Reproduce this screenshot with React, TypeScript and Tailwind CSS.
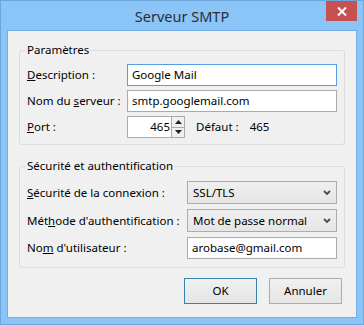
import React from "react";

const Chevron = () => (
  <svg width="8" height="6" viewBox="0 0 8 6">
    <path d="M1 1 L4 4 L7 1" stroke="#3d4d5d" strokeWidth="1.8" fill="none" />
  </svg>
);

const Select = ({ value }: { value: string }) => (
  <div className="h-[23px] border border-[#acacac] bg-gradient-to-b from-[#f0f0f0] to-[#e5e5e5] flex items-center justify-between pl-[5px] pr-[5px]">
    <span>{value}</span>
    <Chevron />
  </div>
);

const Input = ({ value, focused }: { value: string; focused?: boolean }) => (
  <div
    className={
      "h-[22px] bg-white border flex items-center pl-[4px] " +
      (focused ? "border-[#569de5]" : "border-[#ababab]")
    }
  >
    {value}
  </div>
);

export default function App() {
  return (
    <div className="w-[364px] h-[325px] bg-[#8bc4f7] border border-[#6ca6dc] flex flex-col font-['Noto_Sans',sans-serif] text-[11.5px] text-black leading-[16px]">
      <div className="relative h-[29px] flex items-center justify-center">
        <span className="text-[14.5px] text-[#2b2f36] leading-[20px]">Serveur SMTP</span>
        <div className="absolute top-0 right-[6px] w-[31px] h-[20px] bg-[#c75050] flex items-center justify-center">
          <svg width="10" height="9" viewBox="0 0 10 9">
            <path d="M1 0.5 L9 8.5 M9 0.5 L1 8.5" stroke="white" strokeWidth="2" />
          </svg>
        </div>
      </div>
      <div className="flex-1 px-[6px] pb-[6px] flex">
        <div className="flex-1 bg-[#f0f0f0] border border-[#73aee5] flex flex-col px-[11px] pt-[11px]">
          <fieldset className="border border-[#dcdcdc] rounded-[3px] px-[7px] pt-[6px] pb-[6px]">
            <legend className="-ml-[1px] px-[1px] leading-[16px]">Paramètres</legend>
            <div className="grid grid-cols-[100px_1fr] gap-y-[4px] items-center">
              <span>
                <span className="underline">D</span>escription :
              </span>
              <Input value="Google Mail" focused />
              <span>
                Nom du <span className="underline">s</span>erveur :
              </span>
              <Input value="smtp.googlemail.com" />
              <span>
                <span className="underline">P</span>ort :
              </span>
              <div className="flex items-center h-[22px]">
                <div className="w-[45px] h-[22px] bg-white border border-[#ababab] flex items-center justify-end pr-[1px]">
                  465
                </div>
                <div className="w-[13px] h-[22px] border border-l-0 border-[#ababab] flex flex-col bg-[#f0f0f0]">
                  <div className="flex-1 flex items-center justify-center border-b border-[#ababab]">
                    <svg width="7" height="4" viewBox="0 0 7 4">
                      <path d="M0 4 L3.5 0 L7 4 Z" fill="#222" />
                    </svg>
                  </div>
                  <div className="flex-1 flex items-center justify-center">
                    <svg width="7" height="4" viewBox="0 0 7 4">
                      <path d="M0 0 L3.5 4 L7 0 Z" fill="#222" />
                    </svg>
                  </div>
                </div>
                <span className="ml-[11px]">Défaut :</span>
                <span className="ml-[11px]">465</span>
              </div>
            </div>
          </fieldset>
          <fieldset className="mt-[13px] border border-[#dcdcdc] rounded-[3px] px-[7px] pt-[7px] pb-[8px]">
            <legend className="-ml-[1px] px-[1px] leading-[16px]">Sécurité et authentification</legend>
            <div className="grid grid-cols-[160px_1fr] gap-y-[5px] items-center">
              <span>
                <span className="underline">S</span>écurité de la connexion :
              </span>
              <Select value="SSL/TLS" />
              <span>
                Mét<span className="underline">h</span>ode d'authentification :
              </span>
              <Select value="Mot de passe normal" />
              <span>
                No<span className="underline">m</span> d'utilisateur :
              </span>
              <Input value="arobase@gmail.com" />
            </div>
          </fieldset>
          <div className="mt-[10px] flex justify-end gap-[12px] pr-[3px]">
            <button className="w-[73px] h-[26px] border border-[#3c7fb1] bg-gradient-to-b from-[#f0f0f0] to-[#e5e5e5]">
              OK
            </button>
            <button className="w-[73px] h-[26px] border border-[#acacac] bg-gradient-to-b from-[#f0f0f0] to-[#e5e5e5]">
              Annuler
            </button>
          </div>
        </div>
      </div>
    </div>
  );
}
